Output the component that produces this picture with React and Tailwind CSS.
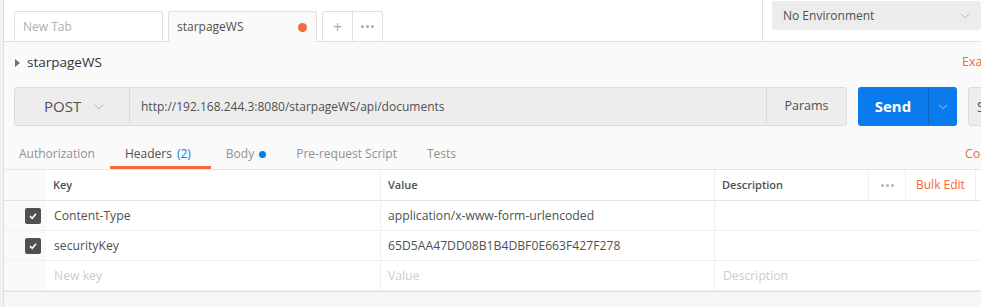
import { ChevronDown } from "lucide-react";

const font = { fontFamily: '"Open Sans", "Liberation Sans", sans-serif' };

function Check() {
  return (
    <span className="w-[16px] h-[16px] rounded-[2px] bg-[#505050] flex items-center justify-center">
      <svg width="10" height="10" viewBox="0 0 10 10">
        <path d="M2 5.2 L4.2 7.3 L8 2.8" fill="none" stroke="#fff" strokeWidth="1.6" />
      </svg>
    </span>
  );
}

function Row({ checked, k, v, d, placeholder }) {
  const txt = placeholder ? "text-[#cccccc]" : "text-[#505050]";
  return (
    <div className="flex h-[30px] border-b border-[#f0f0f0]">
      <div className="w-[42px] shrink-0 flex items-center justify-end pr-[5px]">
        {checked && <Check />}
      </div>
      <div className={`w-[334px] shrink-0 bg-white flex items-center pl-[8px] pt-[2px] text-[12.2px] ${txt}`}>{k}</div>
      <div className={`w-[334px] shrink-0 bg-white border-l border-[#f0f0f0] flex items-center pl-[7px] pt-[2px] text-[12.2px] ${txt}`}>{v}</div>
      <div className={`flex-1 bg-white border-l border-[#f0f0f0] flex items-center pl-[8px] pt-[2px] text-[12.2px] ${txt}`}>{d}</div>
    </div>
  );
}

export default function App() {
  return (
    <div className="flex w-[981px] h-[307px] overflow-hidden bg-[#fafafa]" style={font}>
      <div className="w-[4px] shrink-0 bg-[#f2f2f2] border-r border-[#dedede]" />
      <div className="flex-1 min-w-0 flex flex-col overflow-hidden">
        {/* top tab bar */}
        <div className="h-[42px] shrink-0 bg-white border-b border-[#e2e2e2] flex">
          <div className="flex items-end pl-[10px] gap-[5px]">
            <div className="w-[149px] h-[30px] border border-b-0 border-[#e0e0e0] rounded-t-[3px] flex items-center pl-[8px] text-[12px] text-[#b0b0b0] bg-white">
              New Tab
            </div>
            <div className="w-[149px] h-[31px] -mb-px border border-b-0 border-[#e0e0e0] rounded-t-[3px] flex items-center justify-between pl-[8px] pr-[9px] text-[12px] text-[#505050] bg-[#fafafa]">
              starpageWS
              <span className="w-[9px] h-[9px] rounded-full bg-[#f26b3a]" />
            </div>
            <div className="h-[30px] border border-b-0 border-[#e0e0e0] rounded-t-[3px] flex bg-white">
              <div className="w-[30px] flex items-center justify-center text-[16px] text-[#aaaaaa] border-r border-[#e0e0e0]">+</div>
              <div className="w-[29px] flex items-center justify-center gap-[2px]">
                <span className="w-[3px] h-[3px] rounded-full bg-[#aaaaaa]" />
                <span className="w-[3px] h-[3px] rounded-full bg-[#aaaaaa]" />
                <span className="w-[3px] h-[3px] rounded-full bg-[#aaaaaa]" />
              </div>
            </div>
          </div>
          <div className="ml-auto flex">
            <div className="w-px bg-[#e0e0e0]" />
            <div className="ml-[9px] mt-[1px] w-[209px] h-[29px] rounded-[3px] bg-[#ececec] flex items-center justify-between pl-[11px] pr-[8px] pt-px text-[12px] text-[#505050]">
              No Environment
              <ChevronDown size={16} strokeWidth={1.3} color="#b5b5b5" />
            </div>
          </div>
        </div>

        {/* title row */}
        <div className="h-[40px] shrink-0 flex items-center overflow-hidden">
          <div className="w-[958px] shrink-0 flex items-center pl-[11px] pt-px">
            <svg width="5" height="8" viewBox="0 0 5 8" className="mr-[7px]">
              <path d="M0 0 L5 4 L0 8 Z" fill="#707070" />
            </svg>
            <span className="text-[13.5px] text-[#333333]">starpageWS</span>
          </div>
          <span className="pt-px text-[12.5px] text-[#f26b3a] whitespace-nowrap">Examples (0)</span>
        </div>

        {/* request bar */}
        <div className="mt-[5px] flex items-center gap-[11px] pl-[10px] overflow-hidden shrink-0">
          <div className="w-[833px] h-[39px] shrink-0 flex rounded-[3px] border border-[#dcdcdc] bg-[#ededed]">
            <div className="w-[115px] flex items-center pl-[29px] gap-[10px] text-[15px] text-[#505050] border-r border-[#dcdcdc]">
              POST
              <ChevronDown size={16} strokeWidth={1.3} color="#aaaaaa" />
            </div>
            <div className="flex-1 flex items-center pl-[11px] text-[12px] text-[#505050]">
              http://192.168.244.3:8080/starpageWS/api/documents
            </div>
            <div className="w-[80px] flex items-center justify-center border-l border-[#dcdcdc] text-[12.5px] text-[#505050]">
              Params
            </div>
          </div>
          <div className="w-[99px] h-[39px] shrink-0 flex rounded-[3px] bg-[#097bed] text-white">
            <div className="w-[70px] flex items-center justify-center text-[15px] font-bold">Send</div>
            <div className="flex-1 border-l border-[#0a64c2] flex items-center justify-center">
              <ChevronDown size={14} strokeWidth={1.5} color="#b8d7fa" />
            </div>
          </div>
          <div className="w-[80px] h-[39px] shrink-0 rounded-[3px] border border-[#dcdcdc] bg-[#ededed] flex items-center pl-[8px] text-[14px] text-[#505050]">
            Save
          </div>
        </div>

        {/* sub tabs */}
        <div className="mt-[13px] h-[31px] shrink-0 flex border-b border-[#e6e6e6] overflow-hidden">
          <div className="w-[961px] shrink-0 flex text-[12px] text-[#909090]">
            <div className="h-[30px] px-[15px] flex items-center">Authorization</div>
            <div className="h-[30px] pl-[15px] pr-[20px] flex items-center border-b-[3px] border-[#f26b3a] pt-[3px] text-[#505050]">
              Headers <span className="ml-[5px] text-[#097bed]">(2)</span>
            </div>
            <div className="h-[30px] px-[15px] flex items-center">
              Body <span className="ml-[5px] w-[7px] h-[7px] rounded-full bg-[#097bed]" />
            </div>
            <div className="h-[30px] px-[15px] flex items-center">Pre-request Script</div>
            <div className="h-[30px] px-[15px] flex items-center">Tests</div>
          </div>
          <div className="h-[30px] flex items-center text-[12.5px] text-[#f26b3a] whitespace-nowrap">Code</div>
        </div>

        {/* headers table */}
        <div className="shrink-0 border-b border-[#e0e0e0]">
          <div className="flex h-[31px] border-b border-[#e4e4e4]">
            <div className="w-[42px] shrink-0" />
            <div className="w-[334px] shrink-0 bg-white flex items-center pl-[7px] text-[11px] font-semibold text-[#505050]">Key</div>
            <div className="w-[334px] shrink-0 bg-white border-l border-[#f0f0f0] flex items-center pl-[7px] text-[11px] font-semibold text-[#505050]">Value</div>
            <div className="w-[154px] shrink-0 bg-white border-l border-[#f0f0f0] flex items-center pl-[7px] text-[11px] font-semibold text-[#505050]">Description</div>
            <div className="w-[37px] shrink-0 bg-white border-l border-[#f0f0f0] flex items-center justify-center gap-[2px]">
              <span className="w-[3px] h-[3px] rounded-full bg-[#b5b5b5]" />
              <span className="w-[3px] h-[3px] rounded-full bg-[#b5b5b5]" />
              <span className="w-[3px] h-[3px] rounded-full bg-[#b5b5b5]" />
            </div>
            <div className="w-[70px] shrink-0 bg-white border-l border-[#f0f0f0] flex items-center pl-[10px] text-[12px] text-[#f26b3a] whitespace-nowrap">Bulk Edit</div>
            <div className="flex-1 bg-white border-l border-[#f0f0f0]" />
          </div>
          <Row checked k="Content-Type" v="application/x-www-form-urlencoded" d="" />
          <Row checked k="securityKey" v="65D5AA47DD08B1B4DBF0E663F427F278" d="" />
          <Row placeholder k="New key" v="Value" d="Description" />
        </div>
        <div className="flex-1 bg-[#f7f7f7]" />
      </div>
    </div>
  );
}
